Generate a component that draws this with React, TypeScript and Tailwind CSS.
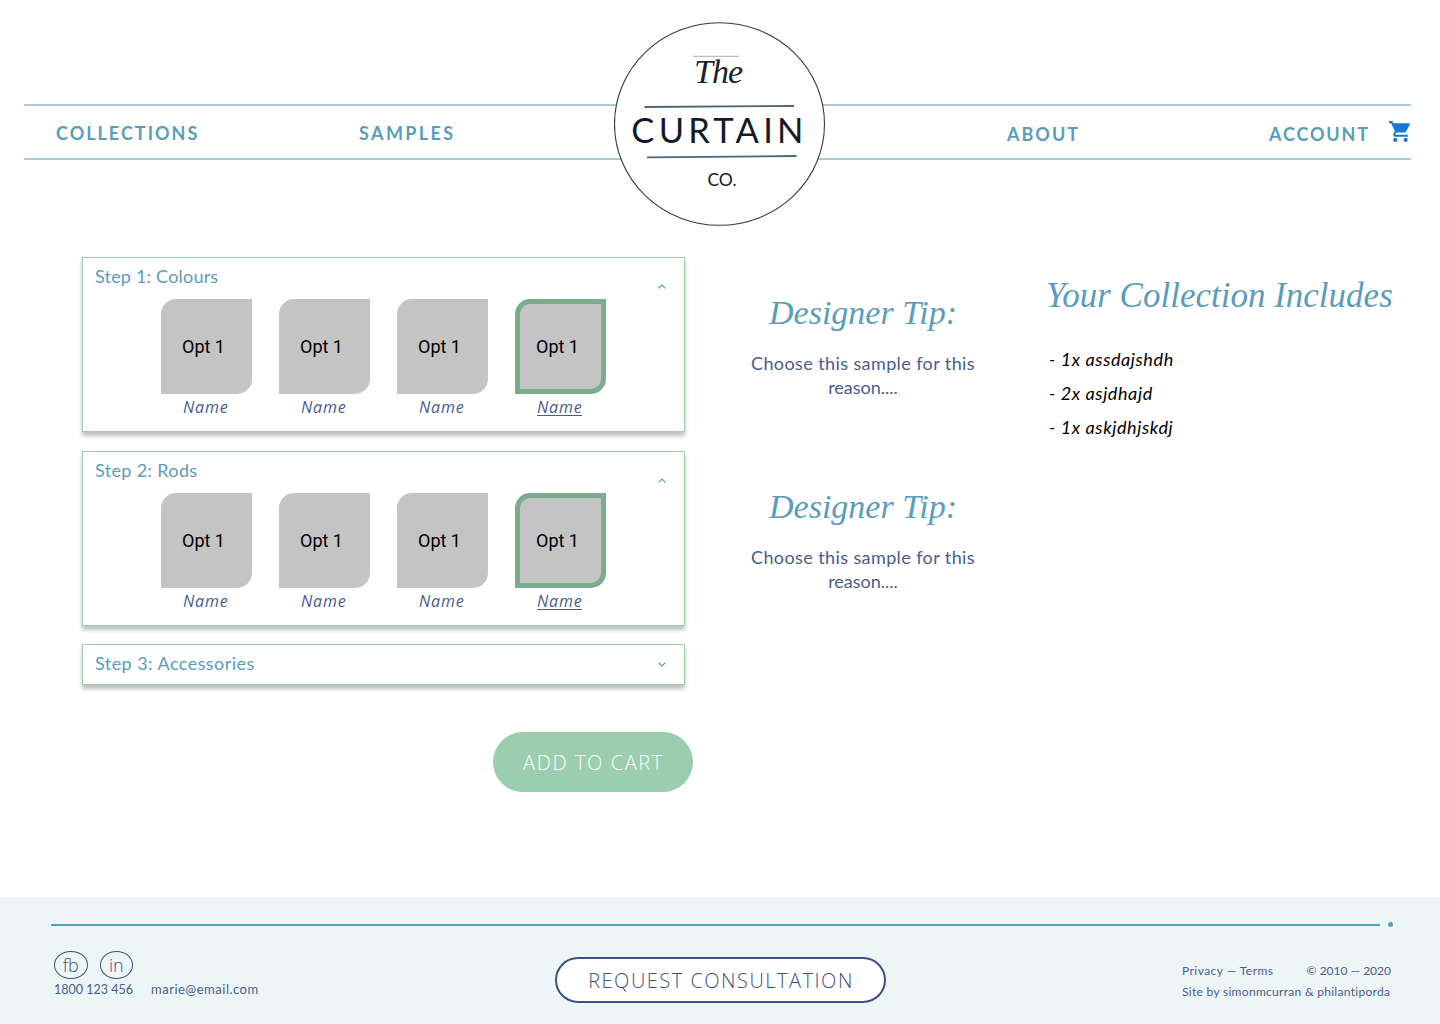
import { MdShoppingCart } from "react-icons/md";

function Logo() {
  return (
    <div className="absolute left-[614px] top-[22px] h-[204px] w-[212px]">
      <svg className="absolute inset-0" width="212" height="204" viewBox="0 0 212 204" fill="none">
        <ellipse cx="105.5" cy="102" rx="105" ry="101.3" fill="#fff" stroke="#3a3a3c" strokeWidth="1.1" />
        <path d="M79 34.3H125" stroke="#8c8c8c" strokeWidth="0.7" />
        <path d="M30.5 85L180 84" stroke="#4b6675" strokeWidth="1.8" />
        <path d="M33 135.4L182.500 134" stroke="#4b6675" strokeWidth="1.8" />
      </svg>
      <div className="relative flex flex-col items-center whitespace-nowrap text-[#151a26]">
        <span className="-ml-1 mt-[31px] h-[38px] font-['Liberation_Serif'] text-[34px] italic leading-[38px] tracking-[-1px] text-[#222]">The</span>
        <span className="-ml-px mt-[18px] h-[42px] font-[Lato] text-[34.500px] leading-[42px] tracking-[4.250px]">CURTAIN</span>
        <span className="ml-[4px] mt-[18px] font-[Lato] text-[17.500px] leading-[22px]">CO.</span>
      </div>
    </div>
  );
}

function Header() {
  return (
    <header className="relative h-[257px] pl-6 pr-[29px] pt-[104px]">
      <nav className="grid h-14 grid-cols-[303px_648px_262px_1fr] border-y-2 border-[#a9ccdb] pl-8 font-[Lato] text-[18px] font-bold leading-[54px] text-[#5b9db9]">
        <a className="tracking-[2px]">COLLECTIONS</a>
        <a className="tracking-[2.4px]">SAMPLES</a>
        <a className="pt-px tracking-[2px]">ABOUT</a>
        <div className="flex justify-between">
          <a className="pt-px tracking-[1.850px]">ACCOUNT</a>
          <MdShoppingCart className="-mr-0.5 mt-[13px] size-[25px] text-[#1976d2]" />
        </div>
      </nav>
      <Logo />
    </header>
  );
}

function Chevron({ down = false }: { down?: boolean }) {
  return (
    <svg width="8" height="5" viewBox="0 0 8 5" fill="none" stroke="#4f97bb" strokeWidth="1.1">
      <path d={down ? "M0.600 0.600L4 4L7.400 0.600" : "M0.600 4.400L4 1L7.400 4.400"} />
    </svg>
  );
}

function Swatch({ selected = false }: { selected?: boolean }) {
  return (
    <div className="w-[91px]">
      <div
        className={
          "flex h-[95px] items-center rounded-br-[15px] rounded-tl-[15px] bg-[#c4c4c4] font-[Roboto] text-[18px] text-black " +
          (selected ? "border-[5px] border-[#7aac8d] pl-4" : "pl-[21px]")
        }
      >
        Opt 1
      </div>
      <div className="mt-0.5 flex pl-[22px] font-['Open_Sans'] text-[16px] font-normal italic leading-[22px] text-[#4a5d8c]">
        <span className={"h-5 " + (selected ? "border-b border-[#4a5d8c]" : "")}>
          <span className="tracking-[0.8px]">Nam</span>e
        </span>
      </div>
    </div>
  );
}

function Step({ title, spacing }: { title: string; spacing: string }) {
  return (
    <section className="h-[175px] border border-[#99cfae] bg-white shadow-[0_4px_4px_rgba(0,0,0,0.25)]">
      <div className="flex h-[41px] justify-between pl-3 pr-[18px]">
        <h2 className={"pt-[6px] text-[18px] leading-6 text-[#5b9db9] " + spacing}>{title}</h2>
        <div className="pt-[26px]"><Chevron /></div>
      </div>
      <div className="flex gap-[27px] pl-[78px]">
        <Swatch />
        <Swatch />
        <Swatch />
        <Swatch selected />
      </div>
    </section>
  );
}

function Tip() {
  return (
    <section className="h-[194px] text-center">
      <h2 className="font-['Liberation_Serif'] text-[34px] italic leading-[40px] text-[#5b9db9]">Designer Tip:</h2>
      <p className="mt-[18px] text-[18px] leading-6 tracking-[0.4px] text-[#4a5d8c]">
        Choose this sample for this
        <br />
        <span className="tracking-normal">reason....</span>
      </p>
    </section>
  );
}

function Footer() {
  return (
    <footer className="h-[127px] bg-[#edf5f7] pt-[27px] text-[#4a5d8c]">
      <div className="flex items-center pl-[51px]">
        <div className="h-0.5 w-[1329px] bg-[#5b9db9]" />
        <div className="-mb-1.5 -mt-[7px] ml-2 size-[5px] rounded-full bg-[#5b9db9]" />
      </div>
      <div className="flex pl-[54px]">
        <div className="w-[501px] pt-[25px]">
          <div className="flex gap-3 font-['Open_Sans'] text-[18px] font-light leading-[26px] text-[#3d5180]">
            <span className="h-7 w-[33.500px] rounded-[50%] border border-[#3d5180] text-center">fb</span>
            <span className="h-7 w-[33.500px] rounded-[50%] border border-[#3d5180] text-center">in</span>
          </div>
          <div className="flex items-baseline gap-[18px] leading-5">
            <span className="w-[79px] text-[12.500px]">1800 123 456</span>
            <span className="text-[13px] tracking-[0.500px]">marie@email.com</span>
          </div>
        </div>
        <button className="mt-[31px] h-[46px] w-[331px] whitespace-nowrap rounded-full border-2 border-[#3d5180] bg-white pl-px pt-0.5 font-['Open_Sans'] text-[20px] font-light tracking-[1.500px] text-[#3d5180]">
          REQUEST CONSULTATION
        </button>
        <div className="ml-[296px] w-[209px] whitespace-nowrap pt-[34px] text-[12px] leading-[21px]">
          <div className="flex justify-between">
            <span className="tracking-[0.450px]">Privacy — Terms</span>
            <span>© 2010 — 2020</span>
          </div>
          <div className="tracking-[0.300px]">Site by simonmcurran &amp; philantiporda</div>
        </div>
      </div>
    </footer>
  );
}

export default function App() {
  return (
    <div className="h-[1024px] w-[1440px] overflow-hidden bg-white font-[Lato]">
      <Header />
      <main className="flex h-[640px] pl-[82px]">
        <div className="w-[603px]">
          <Step title="Step 1: Colours" spacing="tracking-[0.2px]" />
          <div className="h-[19px]" />
          <Step title="Step 2: Rods" spacing="tracking-[0.35px]" />
          <section className="mt-[18px] flex h-[41px] items-center justify-between border border-[#99cfae] pl-3 pr-[18px] shadow-[0_4px_4px_rgba(0,0,0,0.25)]">
            <h2 className="pb-[3px] text-[18px] leading-6 tracking-[0.450px] text-[#5b9db9]">Step 3: Accessories</h2>
            <Chevron down />
          </section>
          <button className="ml-[411px] mt-[47px] h-[60px] w-[200px] whitespace-nowrap rounded-full bg-[#9bcdae] pl-px pt-0.5 font-['Open_Sans'] text-[20px] font-light tracking-[1.600px] text-white">
            ADD TO CART
          </button>
        </div>
        <div className="ml-[60px] w-[236px] pt-[36px]">
          <Tip />
          <Tip />
        </div>
        <div className="ml-[65px] whitespace-nowrap pt-[19px]">
          <h2 className="font-['Liberation_Serif'] text-[35px] italic leading-[40px] text-[#5b9db9]">Your Collection Includes</h2>
          <ul className="mt-[26px] pl-[3px] text-[18px] italic leading-[34px] tracking-[0.6px] text-black">
            <li>- 1x assdajshdh</li>
            <li>- 2x asjdhajd</li>
            <li>- 1x askjdhjskdj</li>
          </ul>
        </div>
      </main>
      <Footer />
    </div>
  );
}
